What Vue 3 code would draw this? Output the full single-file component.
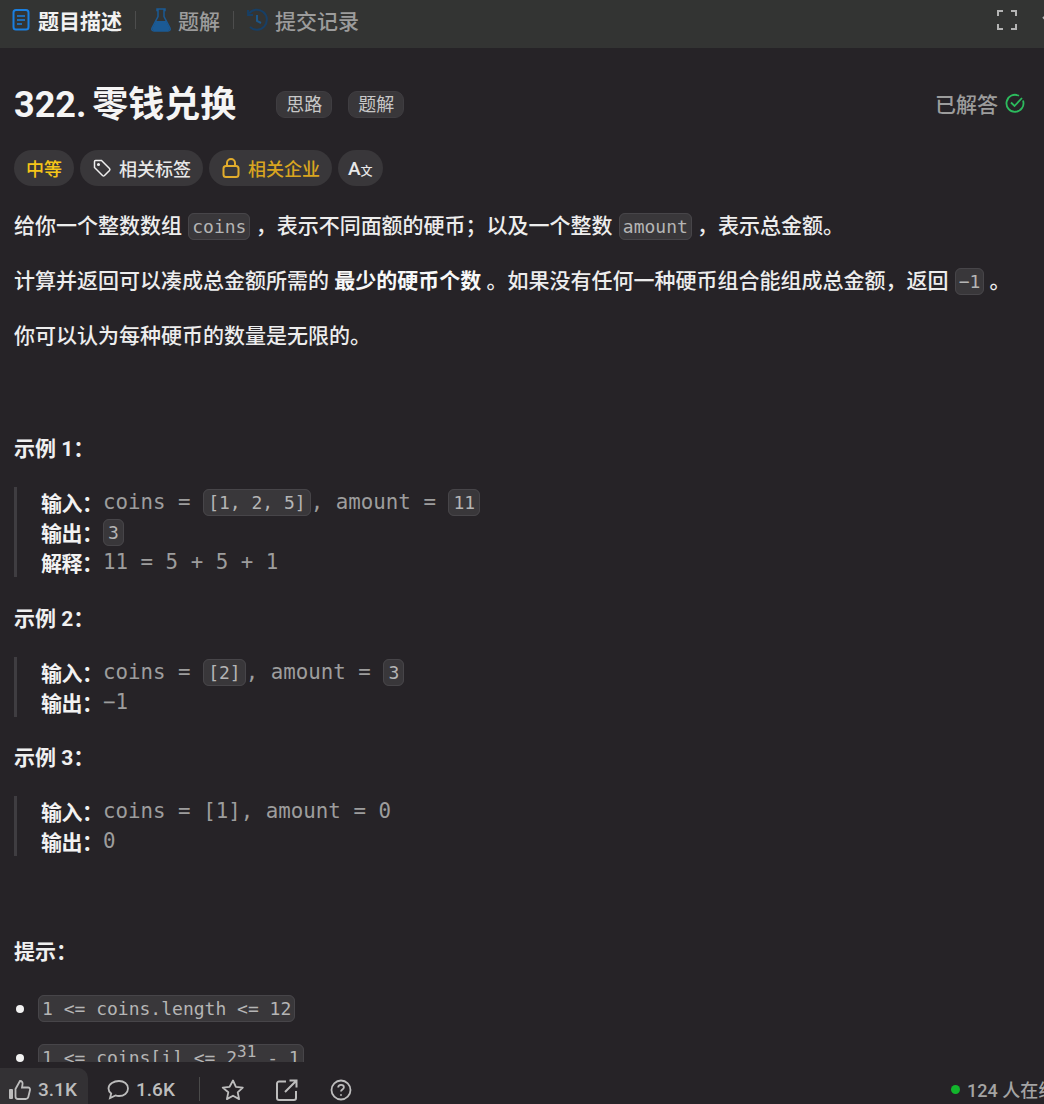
<template>
  <div class="page">
    <div class="tabs">
      <div class="tab active">
        <svg class="tab-icon" width="22" height="24" viewBox="0 0 22 24" fill="none" stroke="#1a7fe0" stroke-width="2">
          <rect x="3.500" y="2" width="15" height="19.500" rx="2.500" />
          <path d="M7 8h8M7 12h8M7 16h5" stroke-width="1.600" />
        </svg>
        <span>题目描述</span>
      </div>
      <i class="tab-sep"></i>
      <div class="tab">
        <svg class="tab-icon" width="22" height="26" viewBox="0 0 22 26">
          <path d="M7 2h8v1.500h-1v6l6 11.500c.8 1.800-.2 3-2 3H4c-1.800 0-2.800-1.200-2-3l6-11.500v-6H7z" fill="none" stroke="#1b5a94" stroke-width="1.500" />
          <path d="M6 14h10l4 8-2 2H4l-2-2z" fill="#1b5a94" />
        </svg>
        <span>题解</span>
      </div>
      <i class="tab-sep"></i>
      <div class="tab tab-history">
        <svg class="tab-icon" width="24" height="24" viewBox="0 0 24 24" fill="none" stroke="#173f66" stroke-width="2">
          <path d="M4 5.500A10 10 0 1 1 5 19" />
          <path d="M3 2v5h5" stroke-width="1.800" />
          <path d="M12 7v6l4 2" stroke="#1c5688" />
        </svg>
        <span>提交记录</span>
      </div>
      <div class="tabs-right">
        <svg width="22" height="22" viewBox="0 0 22 22" fill="none" stroke="#b4b4b4" stroke-width="2">
          <path d="M2 7V2h5M15 2h5v5M20 15v5h-5M7 20H2v-5" />
        </svg>
        <svg width="16" height="16" viewBox="0 0 16 16" fill="none" stroke="#b4b4b4" stroke-width="2">
          <path d="M1 5l7 7 7-7" />
        </svg>
      </div>
    </div>

    <div class="content">
      <div class="title-row">
        <h1 class="title">322. 零钱兑换</h1>
        <span class="mini-tag">思路</span>
        <span class="mini-tag">题解</span>
        <div class="solved">
          <span>已解答</span>
          <svg width="20" height="20" viewBox="0 0 20 20" fill="none" stroke="#2cbb5d" stroke-width="1.800">
            <path d="M18 7.500A8.500 8.500 0 1 1 14 2.800" />
            <path d="M6 9.500l3.500 3.500 7.500-8" />
          </svg>
        </div>
      </div>

      <div class="pills">
        <span class="pill easy">中等</span>
        <span class="pill">
          <svg width="20" height="20" viewBox="0 0 20 20" fill="none" stroke="#eee" stroke-width="1.500">
            <path d="M2.500 3.500a1 1 0 0 1 1-1h6l8 8a1.500 1.500 0 0 1 0 2l-5 5a1.500 1.500 0 0 1-2 0l-8-8z" />
            <circle cx="6.500" cy="6.500" r="0.800" />
          </svg>
          相关标签
        </span>
        <span class="pill company">
          <svg width="20" height="22" viewBox="0 0 20 22" fill="none" stroke="#e2ac2c" stroke-width="2">
            <rect x="2.500" y="9" width="15" height="11" rx="2.500" />
            <path d="M6 9V6a4 4 0 0 1 8 0v3" />
          </svg>
          相关企业
        </span>
        <span class="pill lang">A<small>文</small></span>
      </div>

      <p class="para">给你一个整数数组 <code>coins</code> ，表示不同面额的硬币；以及一个整数 <code>amount</code> ，表示总金额。</p>
      <p class="para">计算并返回可以凑成总金额所需的 <strong>最少的硬币个数</strong> 。如果没有任何一种硬币组合能组成总金额，返回 <code>−1</code> 。</p>
      <p class="para">你可以认为每种硬币的数量是无限的。</p>

      <div v-for="(ex, i) in examples" :key="ex.title" class="example" :class="{ first: i === 0 }">
        <p class="ex-title">{{ ex.title }}</p>
        <div class="quote">
          <div v-for="line in ex.lines" :key="line.label" class="quote-line">
            <b>{{ line.label }}：</b><span class="mono" v-html="line.html"></span>
          </div>
        </div>
      </div>

      <p class="hint-title">提示：</p>
      <ul class="hints">
        <li><code>1 &lt;= coins.length &lt;= 12</code></li>
        <li><code>1 &lt;= coins[i] &lt;= 2<sup>31</sup> - 1</code></li>
      </ul>
    </div>

    <div class="footer">
      <div class="like">
        <svg width="24" height="24" viewBox="0 0 24 24" fill="none" stroke="#bdbdbd" stroke-width="1.800">
          <rect x="1" y="11" width="4" height="10" rx="1" fill="#bdbdbd" stroke="none" />
          <path d="M7.500 11l4.500-8c2 0 3 1.500 2.500 3.500L14 9.500h6c1.500 0 2.300 1.200 2 2.500l-1.700 7c-.3 1.200-1.200 2-2.500 2H10c-1.500 0-2.500-1-2.500-2.500z" />
        </svg>
        <span>3.1K</span>
      </div>
      <div class="comment">
        <svg width="24" height="22" viewBox="0 0 24 22" fill="none" stroke="#bdbdbd" stroke-width="1.800">
          <path d="M13 2c5 0 9 3 9 7.500S18 17 13 17c-1.500 0-2.500-.2-3.500-.6L4 19l1.200-4.500C3.500 13.200 2.500 11.500 2.500 9.500 2.500 5 8 2 13 2z" />
        </svg>
        <span>1.6K</span>
      </div>
      <i class="foot-sep"></i>
      <button class="foot-btn">
        <svg width="24" height="24" viewBox="0 0 24 24" fill="none" stroke="#bdbdbd" stroke-width="1.800">
          <path d="M12 2.500l2.900 6.300 6.900.8-5.100 4.700 1.400 6.800-6.100-3.400-6.100 3.400 1.400-6.800L1.700 9.600l6.900-.8z" stroke-linejoin="round" />
        </svg>
      </button>
      <button class="foot-btn">
        <svg width="24" height="24" viewBox="0 0 24 24" fill="none" stroke="#bdbdbd" stroke-width="2">
          <path d="M11 3.500H4a2 2 0 0 0-2 2V20a2 2 0 0 0 2 2h15a2 2 0 0 0 2-2v-7" />
          <path d="M10 14L21 3M14.500 2.500H21.500V9.500" />
        </svg>
      </button>
      <button class="foot-btn">
        <svg width="24" height="24" viewBox="0 0 24 24" fill="none" stroke="#bdbdbd" stroke-width="1.800">
          <circle cx="12" cy="12" r="9.500" />
          <path d="M9.200 9.500c0-1.700 1.300-2.700 2.900-2.700 1.600 0 2.800 1 2.800 2.400 0 2.300-2.900 2.300-2.900 4.400" />
          <path d="M12 16.200v1.600" />
        </svg>
      </button>
      <div class="online"><i class="dot"></i><span>124 人在线</span></div>
    </div>
  </div>
</template>

<script setup>
const examples = [
  {
    title: '示例 1：',
    lines: [
      { label: '输入', html: 'coins = <code>[1, 2, 5]</code>, amount = <code>11</code>' },
      { label: '输出', html: '<code>3</code>' },
      { label: '解释', html: '11 = 5 + 5 + 1' }
    ]
  },
  {
    title: '示例 2：',
    lines: [
      { label: '输入', html: 'coins = <code>[2]</code>, amount = <code>3</code>' },
      { label: '输出', html: '−1' }
    ]
  },
  {
    title: '示例 3：',
    lines: [
      { label: '输入', html: 'coins = [1], amount = 0' },
      { label: '输出', html: '0' }
    ]
  }
];
</script>

<style>
html, body {
  margin: 0;
  background: #262327;
}
</style>

<style scoped>
.page {
  width: 1044px;
  height: 1104px;
  display: flex;
  flex-direction: column;
  overflow: hidden;
  background: #262327;
  color: #f0f0f0;
  font-family: Roboto, "Noto Sans CJK SC", sans-serif;
}

.tabs {
  height: 48px;
  box-sizing: border-box;
  flex-shrink: 0;
  display: flex;
  align-items: center;
  padding: 0 0 8px 10px;
  overflow: hidden;
  background: #333433;
  font-size: 21px;
  font-weight: 500;
  color: #9c9c9c;
}

.tab {
  display: flex;
  align-items: center;
  gap: 6px;
}

.tab.active {
  color: #f2f2f2;
  font-weight: 700;
}

.tab-history {
  margin-left: -3px;
}

.tab-sep {
  width: 1px;
  height: 18px;
  margin: 0 14px 0 13px;
  background: #4d4d4d;
}

.tabs-right {
  margin-left: auto;
  margin-right: -14px;
  display: flex;
  align-items: center;
  gap: 24px;
}

.content {
  flex: 1;
  min-height: 0;
  overflow: hidden;
  padding: 0 14px;
}

.title-row {
  display: flex;
  align-items: center;
  height: 50px;
  margin-top: 32px;
}

.title {
  margin: 0 40px 0 0;
  font-size: 36px;
  font-weight: 700;
  line-height: 50px;
  word-spacing: -3px;
  color: #f5f5f5;
}

.mini-tag {
  margin-top: -2px;
  margin-right: 16px;
  padding: 0 9px;
  border: 1px solid #3f3d41;
  border-radius: 9px;
  background: #39373a;
  font-size: 18px;
  line-height: 25px;
  color: #c8c8c8;
}

.solved {
  margin-left: auto;
  margin-right: 5px;
  margin-bottom: 4px;
  display: flex;
  align-items: center;
  gap: 7px;
  color: #9c9c9c;
  font-size: 21px;
  font-weight: 500;
}

.pills {
  display: flex;
  gap: 6px;
  margin-top: 20px;
}

.pill {
  height: 36px;
  display: inline-flex;
  align-items: center;
  gap: 7px;
  padding: 0 12px;
  border-radius: 18px;
  background: #39373a;
  font-size: 18px;
  font-weight: 500;
  color: #e8e8e8;
}

.easy {
  color: #f5c518;
}

.company {
  color: #d9a520;
}

.lang {
  gap: 0;
  padding: 0 10px;
  font-size: 19px;
}

.lang small {
  font-size: 12px;
  margin-top: 5px;
}

.para {
  margin: 0 0 24px;
  font-size: 21px;
  font-weight: 500;
  line-height: 31px;
  color: #ededed;
}

.pills + .para {
  margin-top: 25px;
}

.para strong {
  font-weight: 700;
  color: #f8f8f8;
}

.para code,
.hints code,
.mono :deep(code) {
  padding: 2px 3px;
  border: 1px solid #474549;
  border-radius: 6px;
  background: #39373a;
  font-family: "DejaVu Sans Mono", monospace;
  font-size: 18px;
  font-weight: 400;
  color: #b5b5b5;
}

.para code {
  margin-left: 1px;
}

.mono :deep(code) {
  padding: 2px 4px;
}

.ex-title {
  margin: 26.500px 0 23px;
  font-size: 21px;
  line-height: 30px;
  font-weight: 700;
}

.first .ex-title {
  margin-top: 82px;
}

.quote {
  border-left: 3px solid #3f3d41;
  padding-left: 24px;
}

.quote-line {
  display: flex;
  align-items: center;
  height: 30px;
  font-size: 21px;
}

.quote-line b {
  width: 62px;
  flex-shrink: 0;
  white-space: nowrap;
  letter-spacing: -0.500px;
  font-weight: 700;
  color: #f2f2f2;
}

.mono {
  font-family: "DejaVu Sans Mono", monospace;
  font-size: 20.800px;
  color: #9d9d9d;
  white-space: pre;
}

.hint-title {
  margin: 81px 0 0;
  font-size: 21px;
  line-height: 30px;
  font-weight: 700;
}

.hints {
  margin: 27px 0 0;
  padding: 0 0 0 24px;
  list-style: none;
}

.hints li {
  position: relative;
  height: 49px;
  line-height: 30px;
}

.hints li::before {
  content: "";
  position: absolute;
  left: -22px;
  top: 11px;
  width: 8px;
  height: 8px;
  border-radius: 50%;
  background: #f2f2f2;
}

.hints sup {
  font-size: 16px;
  line-height: 0;
}

.footer {
  height: 42px;
  flex-shrink: 0;
  display: flex;
  align-items: flex-end;
  position: relative;
  background: #262327;
  font-size: 19px;
  font-weight: 500;
  color: #bdbdbd;
}

.like {
  width: 88px;
  height: 36px;
  box-sizing: border-box;
  display: flex;
  align-items: center;
  gap: 6px;
  padding: 7px 0 0 8px;
  background: #333134;
  border-radius: 0 10px 0 0;
}

.comment {
  height: 36px;
  box-sizing: border-box;
  display: flex;
  align-items: center;
  gap: 6px;
  margin-left: 18px;
  padding-top: 7px;
}

.foot-sep {
  width: 1px;
  height: 24px;
  margin: 0 21px 3px 24px;
  background: #4a4a4a;
}

.foot-btn {
  width: 24px;
  height: 36px;
  box-sizing: border-box;
  margin-right: 30px;
  padding: 7px 0 0;
  display: flex;
  align-items: center;
  border: none;
  background: none;
}

.online {
  position: absolute;
  left: 951px;
  bottom: 0;
  height: 30px;
  display: flex;
  align-items: center;
  gap: 7px;
  white-space: nowrap;
  font-size: 18px;
  font-weight: 500;
  color: #a4a4a4;
}

.dot {
  width: 9px;
  height: 9px;
  flex-shrink: 0;
  border-radius: 50%;
  background: #12b52c;
}
</style>
